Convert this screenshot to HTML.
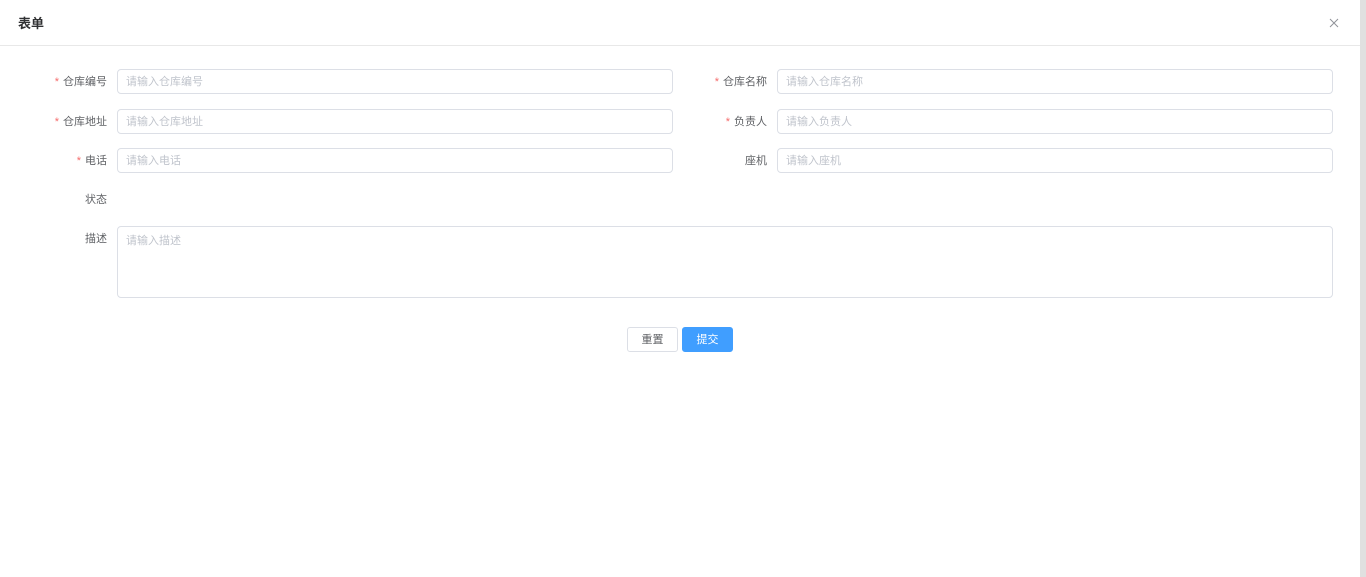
<!DOCTYPE html>
<html><head><meta charset="utf-8"><style>
*{box-sizing:border-box;margin:0;padding:0}
body{width:1366px;height:577px;background:#fff;font-family:"Liberation Sans","Noto Sans CJK SC",sans-serif;font-size:11px;color:#606266;position:relative;overflow:hidden}
.hdr{position:absolute;left:0;top:0;width:1360px;height:46px;border-bottom:1px solid #e8e8e8}
.title{position:absolute;left:18px;top:13px;font-size:13px;color:#303133;font-weight:bold}
.x{position:absolute;left:1329px;top:18px;width:10px;height:10px}
.sb{position:absolute;left:1360px;top:0;width:6px;height:577px;background:#e0e0e0}
.lbl{position:absolute;text-align:right;width:100px;line-height:26px}
.lbl i{color:#f56c6c;font-style:normal;margin-right:4px}
.in{position:absolute;height:25px;border:1px solid #dcdfe6;border-radius:4px;padding-left:8px;line-height:25px;color:#c0c4cc}
.btn{position:absolute;top:327px;width:51px;height:25px;border-radius:3px;text-align:center;line-height:24px}
</style></head><body>
<div class="hdr"><div class="title">表单</div>
<svg class="x" viewBox="0 0 10 10"><path d="M1 1L9 9M9 1L1 9" stroke="#909399" stroke-width="1"/></svg></div>
<div class="sb"></div>

<div class="lbl" style="left:7px;top:69px"><i>*</i>仓库编号</div>
<div class="in" style="left:117px;top:69px;width:556px">请输入仓库编号</div>
<div class="lbl" style="left:667px;top:69px"><i>*</i>仓库名称</div>
<div class="in" style="left:777px;top:69px;width:556px">请输入仓库名称</div>

<div class="lbl" style="left:7px;top:109px"><i>*</i>仓库地址</div>
<div class="in" style="left:117px;top:109px;width:556px">请输入仓库地址</div>
<div class="lbl" style="left:667px;top:109px"><i>*</i>负责人</div>
<div class="in" style="left:777px;top:109px;width:556px">请输入负责人</div>

<div class="lbl" style="left:7px;top:148px"><i>*</i>电话</div>
<div class="in" style="left:117px;top:148px;width:556px">请输入电话</div>
<div class="lbl" style="left:667px;top:148px">座机</div>
<div class="in" style="left:777px;top:148px;width:556px">请输入座机</div>

<div class="lbl" style="left:7px;top:187px">状态</div>
<div class="lbl" style="left:7px;top:226px">描述</div>
<div class="in" style="left:117px;top:226px;width:1216px;height:72px;padding-top:2px;line-height:24px">请输入描述</div>

<div class="btn" style="left:627px;border:1px solid #dcdfe6;color:#606266">重置</div>
<div class="btn" style="left:682px;background:#409eff;border:1px solid #409eff;color:#fff">提交</div>
</body></html>
